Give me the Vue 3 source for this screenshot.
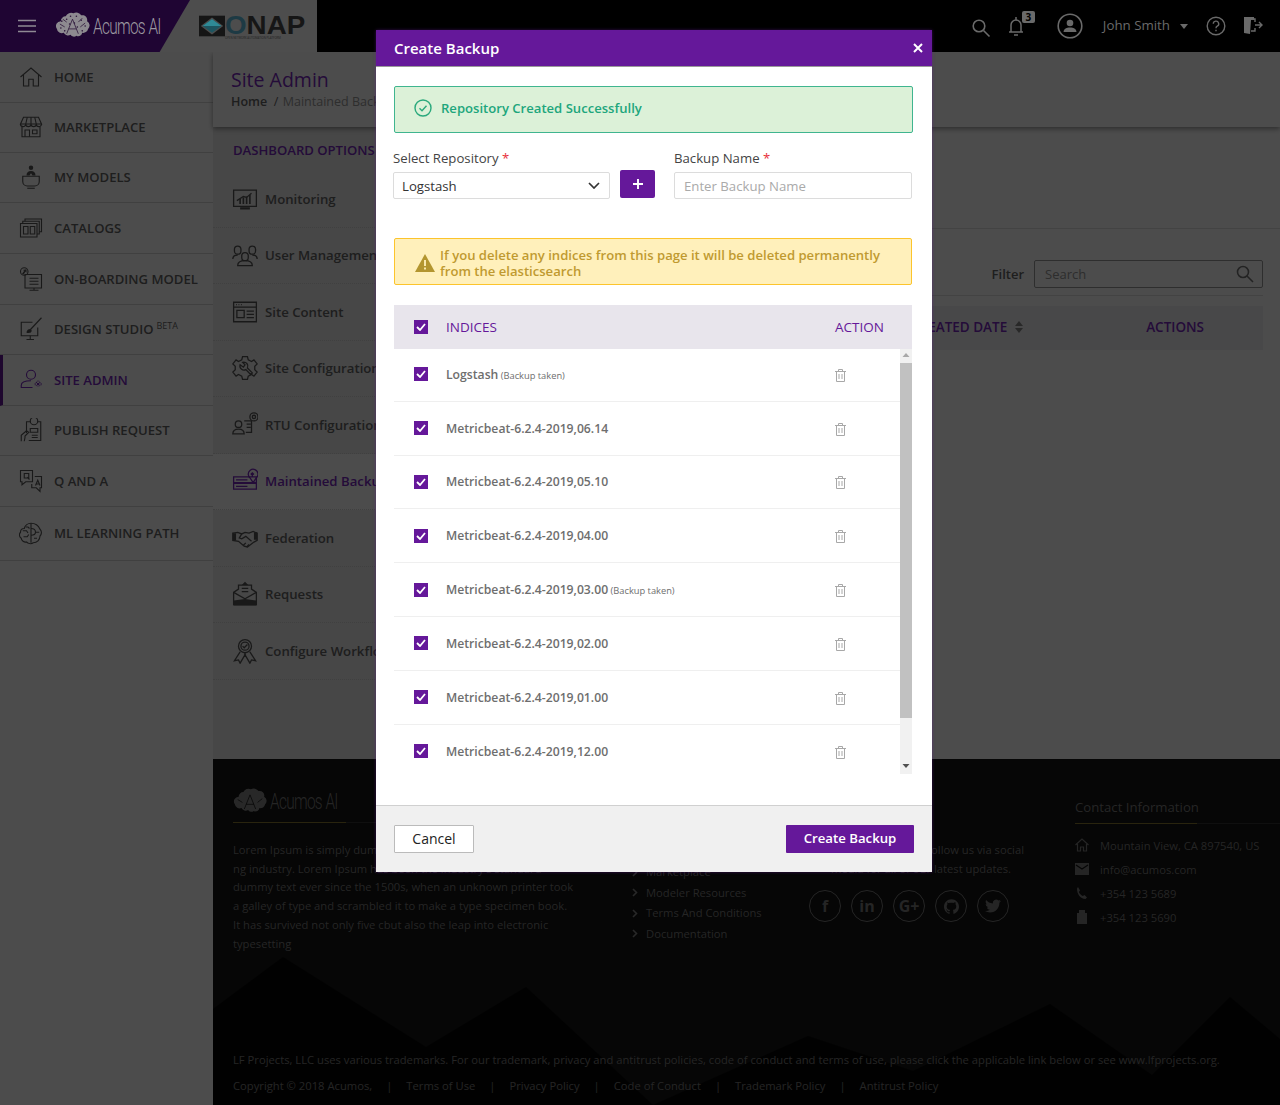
<template>
  <div class="page">
    <!-- Шапка -->
    <header class="topbar">
      <div class="brand">
        <svg class="burger" width="18" height="14" viewBox="0 0 18 14"><path d="M0 1.500h18M0 7h18M0 12.500h18" stroke="#8f8a94" stroke-width="1.600" /></svg>
        <svg class="brain" width="35" height="27" viewBox="0 0 36 27">
          <path :d="brainPath" fill="#8d8a90" />
          <path d="M18 7 12 22M18 7l6 15M14 17h8M5 12l5 3M31 11l-5 4M8 7l4 3M28 6l-4 4" stroke="#2a1338" stroke-width=".8" fill="none" />
          <circle v-for="(d, i) in brainDots" :key="i" :cx="d[0]" :cy="d[1]" r=".8" fill="#2a1338" />
        </svg>
        <span class="brand-name">Acumos<span class="brand-ai">AI</span></span>
      </div>
      <div class="onap">
        <svg width="26" height="22" viewBox="0 0 29 23">
          <path d="M0 0h29v23H0z" fill="#151515" />
          <path d="M14.500 2 27 11.500 14.500 21 2 11.500z" fill="#4d4d4d" />
          <path d="M14.500 4 25 11.500 14.500 19 4 11.500z" fill="#1d5560" />
          <path d="M14.500 4 25 11.500H4z" fill="#2f8a96" />
        </svg>
        <div class="onap-text">
          <span class="onap-name"><span class="onap-o">O</span>NAP</span>
          <span class="onap-sub">OPEN NETWORK AUTOMATION PLATFORM</span>
        </div>
      </div>
      <div class="top-actions">
        <svg width="20" height="20" viewBox="0 0 20 20" fill="none" stroke="#6a6a6a" stroke-width="1.600"><circle cx="8" cy="8" r="5.800" /><path d="m12.500 12.500 6 6" /></svg>
        <div class="bell">
          <svg width="18" height="22" viewBox="0 0 18 22" fill="none" stroke="#6a6a6a" stroke-width="1.500"><path d="M2 17h14M4 17V10a5 5 0 0 1 10 0v7M9 2v3M7 20h4" /></svg>
          <span class="bell-count">3</span>
        </div>
        <svg class="avatar" width="26" height="26" viewBox="0 0 26 26"><circle cx="13" cy="13" r="11.800" fill="none" stroke="#6a6a6a" stroke-width="1.600" /><circle cx="13" cy="10" r="3.300" fill="#6a6a6a" /><path d="M6.500 19c.5-3.500 3-4.500 6.500-4.500s6 1 6.500 4.500z" fill="#6a6a6a" /></svg>
        <span class="user-name">John Smith</span>
        <span class="caret"></span>
        <svg class="help" width="20" height="20" viewBox="0 0 20 20" fill="none" stroke="#6a6a6a" stroke-width="1.400"><circle cx="10" cy="10" r="8.800" /><path d="M7.300 7.800a2.700 2.700 0 1 1 4 2.400c-.9.500-1.300 1-1.300 2M10 13.800v1.400" /></svg>
        <svg width="21" height="20" viewBox="0 0 21 20"><path d="M1 1h10v3H8l-1 14-6-1z" fill="#6a6a6a" /><path d="M8 3h4v3M12 12v3H8M12 9h7M16 6l3 3-3 3" fill="none" stroke="#6a6a6a" stroke-width="1.400" /></svg>
      </div>
    </header>

    <div class="layout">
      <!-- Левое меню -->
      <nav class="sidebar">
        <a
          v-for="item in menu"
          :key="item.label"
          class="menu-item"
          :class="{ active: item.active }"
          :style="{ height: item.h + 'px' }"
        >
          <svg class="menu-icon" width="24" height="24" viewBox="0 0 32 32" fill="none">
            <path v-for="(d, i) in item.paths" :key="i" :d="d" />
            <path v-if="item.fill" class="solid" :d="item.fill" />
          </svg>
          <span>{{ item.label }}<sup v-if="item.beta">BETA</sup></span>
        </a>
      </nav>

      <main class="main">
        <div class="titlebar">
          <h1>Site Admin</h1>
          <p><b>Home</b>&nbsp; / &nbsp;<span>Maintained Backup</span></p>
        </div>

        <div class="content">
          <aside class="options">
            <h2>DASHBOARD OPTIONS</h2>
            <a
              v-for="opt in options"
              :key="opt.label"
              class="option"
              :class="{ active: opt.active }"
            >
              <svg class="option-icon" width="26" height="26" viewBox="0 0 32 32" fill="none">
                <path v-for="(d, i) in opt.paths" :key="i" :d="d" />
                <path v-if="opt.fill" class="solid" :d="opt.fill" />
              </svg>
              <span>{{ opt.label }}</span>
            </a>
          </aside>

          <section class="panel">
            <div class="filter-row">
              <label>Filter</label>
              <div class="search">
                <span>Search</span>
                <svg width="18" height="18" viewBox="0 0 18 18" fill="none" stroke="#777" stroke-width="1.600"><circle cx="7" cy="7" r="5.500" /><path d="m11 11 6 6" /></svg>
              </div>
            </div>
            <div class="panel-head">
              <span class="th-date">CREATED DATE</span>
              <svg width="8" height="12" viewBox="0 0 8 12"><path d="M4 0l4 5H0zM4 12 0 7h8z" fill="#888" /></svg>
              <span class="th-actions">ACTIONS</span>
            </div>
          </section>
        </div>

        <footer class="footer">
          <svg class="peaks" width="1067" height="346" viewBox="0 0 1067 346">
            <path d="M0 250 70 198 213 288 313 228 440 346 595 277 700 312 837 245 939 316 1017 238 1067 280V346H0z" fill="#060606" />
          </svg>
          <div class="foot-cols">
            <div class="foot-about">
              <div class="foot-logo">
                <svg width="34" height="26" viewBox="0 0 36 27">
                  <path :d="brainPath" fill="#888" />
                  <path d="M18 7 12 22M18 7l6 15M14 17h8M5 12l5 3M31 11l-5 4" stroke="#111" stroke-width=".8" fill="none" />
                </svg>
                <span class="foot-logo-name">Acumos<span class="brand-ai">AI</span></span>
              </div>
              <div class="gold-rule"></div>
              <p>Lorem Ipsum is simply dummy text of the printi<br />ng industry. Lorem Ipsum has been the industry's standard<br />dummy text ever since the 1500s, when an unknown printer took<br />a galley of type and scrambled it to make a type specimen book.<br />It has survived not only five cbut also the leap into electronic<br />typesetting</p>
            </div>
            <ul class="foot-links">
              <li v-for="link in footLinks" :key="link">
                <svg width="6" height="9" viewBox="0 0 6 9" fill="none" stroke="#888" stroke-width="1.600"><path d="m1 1 3.500 3.500L1 8" /></svg>
                {{ link }}
              </li>
            </ul>
            <div class="foot-social">
              <p>Please feel free to follow us via social<br />media for all of our latest updates.</p>
              <div class="social-row">
                <span class="social">f</span>
                <span class="social">in</span>
                <span class="social">G+</span>
                <span class="social">
                  <svg width="15" height="15" viewBox="0 0 24 24" fill="#7c7c7c"><path d="M12 .297c-6.630 0-12 5.373-12 12 0 5.303 3.438 9.800 8.205 11.385.6.113.82-.258.82-.577 0-.285-.01-1.040-.015-2.040-3.338.724-4.042-1.610-4.042-1.610C4.422 18.070 3.633 17.700 3.633 17.700c-1.087-.744.084-.729.084-.729 1.205.084 1.838 1.236 1.838 1.236 1.070 1.835 2.809 1.305 3.495.998.108-.776.417-1.305.76-1.605-2.665-.3-5.466-1.332-5.466-5.930 0-1.310.465-2.380 1.235-3.220-.135-.303-.54-1.523.105-3.176 0 0 1.005-.322 3.300 1.230.96-.267 1.980-.399 3-.405 1.020.006 2.040.138 3 .405 2.280-1.552 3.285-1.230 3.285-1.230.645 1.653.24 2.873.12 3.176.765.84 1.230 1.910 1.230 3.220 0 4.610-2.805 5.625-5.475 5.920.42.36.81 1.096.81 2.220 0 1.606-.015 2.896-.015 3.286 0 .315.21.69.825.57C20.565 22.092 24 17.592 24 12.297c0-6.627-5.373-12-12-12" /></svg>
                </span>
                <span class="social">
                  <svg width="16" height="16" viewBox="0 0 24 24" fill="#7c7c7c"><path d="M23.953 4.570a10 10 0 0 1-2.825.775 4.958 4.958 0 0 0 2.163-2.723c-.951.555-2.005.959-3.127 1.184a4.920 4.920 0 0 0-8.384 4.482C7.690 8.095 4.067 6.130 1.640 3.162a4.822 4.822 0 0 0-.666 2.475c0 1.710.87 3.213 2.188 4.096a4.904 4.904 0 0 1-2.228-.616v.06a4.923 4.923 0 0 0 3.946 4.827 4.996 4.996 0 0 1-2.212.085 4.936 4.936 0 0 0 4.604 3.417 9.867 9.867 0 0 1-6.102 2.105c-.39 0-.779-.023-1.170-.067a13.995 13.995 0 0 0 7.557 2.209c9.053 0 13.998-7.496 13.998-13.985 0-.21 0-.42-.015-.63A9.935 9.935 0 0 0 24 4.590z" /></svg>
                </span>
              </div>
            </div>
            <div class="foot-contact">
              <h3>Contact Information</h3>
              <div class="gold-rule short"></div>
              <div class="contact-line">
                <svg width="14" height="14" viewBox="0 0 14 14" fill="none" stroke="#7c7c7c" stroke-width="1.200"><path d="M.5 7 7 1l6.500 6M2.500 6v7H5.500V9h3v4h3V6" /></svg>
                <span>Mountain View, CA 897540, US</span>
              </div>
              <div class="contact-line">
                <svg width="14" height="12" viewBox="0 0 14 12"><path d="M0 0h14v12H0z" fill="#7c7c7c" /><path d="m1 2 6 4 6-4" fill="none" stroke="#111" stroke-width="1.200" /></svg>
                <span>info@acumos.com</span>
              </div>
              <div class="contact-line">
                <svg width="14" height="13" viewBox="0 0 14 13"><path d="M3 0 5 3.500 3.800 5c.8 1.800 2.200 3.200 4 4L9.500 8 12 10.500 10.500 12C5 11.500 2 7 2 1.500z" fill="#7c7c7c" /></svg>
                <span>+354 123 5689</span>
              </div>
              <div class="contact-line">
                <svg width="14" height="14" viewBox="0 0 14 14"><path d="M2 3h10v11H2zM4 0h6v3H4z" fill="#7c7c7c" /></svg>
                <span>+354 123 5690</span>
              </div>
            </div>
          </div>
          <div class="foot-legal">
            <p>LF Projects, LLC uses various trademarks. For our trademark, privacy and antitrust policies, code of conduct and terms of use, please click the applicable link below or see www.lfprojects.org.</p>
            <div class="legal-links">
              <span>Copyright © 2018 Acumos,</span><i>|</i>
              <span>Terms of Use</span><i>|</i>
              <span>Privacy Policy</span><i>|</i>
              <span>Code of Conduct</span><i>|</i>
              <span>Trademark Policy</span><i>|</i>
              <span>Antitrust Policy</span>
            </div>
          </div>
        </footer>
      </main>
    </div>

    <div class="overlay"></div>

    <!-- Модальное окно -->
    <div class="modal">
      <div class="modal-head">
        <span>Create Backup</span>
        <svg width="10" height="10" viewBox="0 0 10 10"><path d="m1 1 8 8M9 1 1 9" stroke="#fff" stroke-width="2" /></svg>
      </div>
      <div class="modal-body">
        <div class="alert success">
          <svg width="18" height="18" viewBox="0 0 18 18" fill="none" stroke="#2aa97c" stroke-width="1.400"><circle cx="9" cy="9" r="8" /><path d="m5.500 9.300 2.500 2.500 4.500-5" /></svg>
          <span>Repository Created Successfully</span>
        </div>
        <div class="form-row">
          <div class="field-select">
            <label>Select Repository <em>*</em></label>
            <div class="select-line">
              <div class="select">
                <span>Logstash</span>
                <svg width="12" height="7" viewBox="0 0 12 7" fill="none" stroke="#333" stroke-width="1.700"><path d="m1 1 5 5 5-5" /></svg>
              </div>
              <button class="add-btn">
                <svg width="12" height="12" viewBox="0 0 12 12"><path d="M6 1v10M1 6h10" stroke="#fff" stroke-width="1.900" /></svg>
              </button>
            </div>
          </div>
          <div class="field-name">
            <label>Backup Name <em>*</em></label>
            <div class="input">Enter Backup Name</div>
          </div>
        </div>
        <div class="alert warning">
          <svg width="20" height="18" viewBox="0 0 20 18"><path d="M10 0 20 18H0z" fill="#b3952f" /><path d="M10 6v6M10 13.500v2" stroke="#fff0bb" stroke-width="1.800" /></svg>
          <span>If you delete any indices from this page it will be deleted permanently from the elasticsearch</span>
        </div>

        <div class="tbl-head">
          <span class="check"><svg width="10" height="8" viewBox="0 0 10 8" fill="none" stroke="#fff" stroke-width="1.800"><path d="m1 4 3 3 5-6" /></svg></span>
          <span class="tbl-title">INDICES</span>
          <span class="tbl-action">ACTION</span>
        </div>
        <div class="tbl-wrap">
          <div class="tbl-rows">
            <div v-for="row in rows" :key="row.name" class="tbl-row">
              <span class="check"><svg width="10" height="8" viewBox="0 0 10 8" fill="none" stroke="#fff" stroke-width="1.800"><path d="m1 4 3 3 5-6" /></svg></span>
              <span class="row-name">{{ row.name }}<small v-if="row.taken"> (Backup taken)</small></span>
              <svg class="trash" width="11" height="13" viewBox="0 0 11 13" fill="none" stroke="#a8a8a8" stroke-width="1"><path d="M0 2.500h11M3.500 2.500V.5h4v2M1.500 2.500v10h8v-10M4 5v5M7 5v5" /></svg>
            </div>
          </div>
          <div class="scrollbar">
            <svg width="12" height="14" viewBox="0 0 12 14"><path d="m6 4 3.500 4h-7z" fill="#a9a9a9" /></svg>
            <div class="thumb"></div>
            <svg class="arrow-down" width="12" height="14" viewBox="0 0 12 14"><path d="m6 10 3.500-4h-7z" fill="#505050" /></svg>
          </div>
        </div>
      </div>
      <div class="modal-foot">
        <button class="btn-cancel">Cancel</button>
        <button class="btn-create">Create Backup</button>
      </div>
    </div>
  </div>
</template>

<script setup>
const brainPath = 'M6 9a5 5 0 0 1 5-5 6 6 0 0 1 8-3 6 6 0 0 1 8 2 5 5 0 0 1 6 6 5 5 0 0 1 1 8 5 5 0 0 1-6 4 4 4 0 0 1-6 3 4 4 0 0 1-6-1 5 5 0 0 1-7-2 5 5 0 0 1-7-4 5 5 0 0 1 4-8z'
const brainDots = [[7, 9], [12, 7], [16, 4], [22, 4], [27, 8], [31, 14], [28, 19], [6, 16], [10, 19], [20, 11], [15, 12], [23, 15]]

// Пункты левого меню
const menu = [
  { label: 'HOME', h: 51, paths: ['M2 16 16 4l14 12', 'M6 13v15h7v-9h6v9h7V13'] },
  { label: 'MARKETPLACE', h: 50, paths: ['M6 3h20l4 9H2z', 'M2 12a3.500 3.500 0 0 0 7 0 3.500 3.500 0 0 0 7 0 3.500 3.500 0 0 0 7 0 3.500 3.500 0 0 0 7 0', 'M4 16v13h24V16', 'M8 29v-9h6v9M18 20h6v5h-6zM11 3 9 12M16 3v9M21 3l2 9'] },
  { label: 'MY MODELS', h: 50, paths: ['M5 15h22v7a6 6 0 0 1-6 6H11a6 6 0 0 1-6-6z', 'M11 31h10'], fill: 'M13 3.500a3 3 0 1 0 6 0 3 3 0 1 0-6 0M10 14c0-4 2-6 6-6s6 2 6 6h-4l-2-3-2 3z' },
  { label: 'CATALOGS', h: 51, paths: ['M2 10h22v18H2z', 'M5 10V7h22v17h-3', 'M8 7V4h22v17h-3', 'M6 14h6v10H6zM15 14h6v10h-6z'] },
  { label: 'ON-BOARDING MODEL', h: 51, paths: ['M8 10H30v18H8z', 'M14 15h12M14 19h12M14 23h12', 'M14 31h12M20 28v3', 'M2 6a5 5 0 1 0 10 0 5 5 0 1 0-10 0'], fill: 'M4 9l3-4-2-1 5-1v5l-1-2-3 4z' },
  { label: 'DESIGN STUDIO', beta: true, h: 50, paths: ['M18 7H3v18h22V14', 'M10 30h10M15 25v5', 'M30 1 15 17'], fill: 'M10 21c0-3 2-5 5-5l2 2c0 3-3 4-7 3z' },
  { label: 'SITE ADMIN', active: true, h: 51, paths: ['M10 9a6 6 0 1 0 12 0 6 6 0 1 0-12 0', 'M18 26H3v-3c0-4 5-6 13-6'], fill: 'M22 21a3.500 3.500 0 1 0 7 0 3.500 3.500 0 1 0-7 0M24 17h3v8h-3zM21 20h9v3h-9z' },
  { label: 'PUBLISH REQUEST', h: 50, paths: ['M10 20V5h6M24 5h5v25H13', 'M15 4a5 5 0 0 0 10 0 5 5 0 0 0-10 0', 'M15 14h10v5H15zM17 23h8M17 26h8', 'M3 31v-8l7-6 3 2-5 5v2l-1 5'] },
  { label: 'Q AND A', h: 51, paths: ['M2 2h16v15H9l-5 4v-4H2z', 'M7 6h6v6H7zM11 11l3 3', 'M21 10h9v15h-2v5l-5-5h-6v-5', 'M22 22l3-7 3 7M23 20h4'] },
  { label: 'ML LEARNING PATH', h: 54, paths: ['M16 3a13 13 0 0 1 12 8c3 3 2 7 0 9 0 5-4 9-9 9-3 2-7 1-9-1-3 1-7-2-7-5-3-2-3-6-1-8 0-3 2-5 5-5 1-4 5-7 9-7z', 'M16 3v26', 'M16 10c4 0 6 2 6 5s-3 4-6 4M22 15h5M20 23h4', 'M5 13h5l2 3M6 21h5l2-3M9 8h3l2 2'] }
]

// Опции панели
const options = [
  { label: 'Monitoring', paths: ['M2 5h28v20H2z', 'M6 18l8-5 4 1 6-5'], fill: 'M9 16h2v6H9zM13 14h2v8h-2zM17 13h2v9h-2zM21 11h2v11h-2zM10 26h12v3H10z' },
  { label: 'User Management', paths: ['M3 9a4 4 0 1 1 8 0v2a4 4 0 0 1-8 0z', 'M21 9a4 4 0 1 1 8 0v2a4 4 0 0 1-8 0z', 'M12 17a4 4 0 1 1 8 0v2a4 4 0 0 1-8 0z', 'M1 21c0-4 2-5 6-5M31 21c0-4-2-5-6-5', 'M7 29c0-4 4-6 9-6s9 2 9 6z'] },
  { label: 'Site Content', paths: ['M2 4h28v24H2z', 'M2 10h28', 'M6 14h9v9H6zM18 15h9M18 19h9M18 23h9', 'M5 7h1M8 7h1M11 7h1'] },
  { label: 'Site Configuration', paths: ['M13 2h6l1 4 4 2 3-2 4 5-3 3v4l3 3-4 5-3-2-4 2-1 4h-6l-1-4-4-2-3 2-4-5 3-3v-4l-3-3 4-5 3 2 4-2z', 'M10 12a5 5 0 0 0 7 6l6 6 2-2-6-6a5 5 0 0 0-6-7l3 3-2 3z'] },
  { label: 'RTU Configuration', paths: ['M4 15a4 4 0 1 0 8 0 4 4 0 1 0-8 0', 'M1 27c0-4 3-6 7-6s7 2 7 6z', 'M15 11h9v14h-7M18 15h5M18 19h5', 'M22 6a5 5 0 1 0 10 0 5 5 0 1 0-10 0', 'M25 6a2 2 0 1 0 4 0 2 2 0 1 0-4 0'] },
  { label: 'Maintained Backup', active: true, paths: ['M2 11h28v7H2zM2 19h28v7H2z', 'M5 14.500h14M5 22.500h14', 'M20 8a6 6 0 1 1 10 4l-4 6-4-6a6 6 0 0 1-2-4z', 'M25 11V6M23 8l2-2 2 2'] },
  { label: 'Federation', paths: ['M1 10l6-1 5 2 4-2 5 1 5-2 5 2v9l-4 2-8 6-4-1-7-6-7-1z', 'M12 11l-3 5 3 1 5-3 7 6M14 25l3-3M18 27l3-3'], fill: 'M1 10h4v9H1zM27 9h4v9h-4z' },
  { label: 'Requests', paths: ['M2 14l6-4V5h16v5l6 4v15H2z', 'M2 14l14 8 14-8', 'M12 9h8M12 13h8'], fill: 'M16 1l4 4h-8zM2 24l14-2 14 2v6H2z' },
  { label: 'Configure Workflow', paths: ['M8 10a8 8 0 1 0 16 0 8 8 0 1 0-16 0', 'M11 10a5 5 0 1 0 10 0 5 5 0 1 0-10 0', 'M13 10l2 2 4-4', 'M10 17 3 28l5-1 2 4 7-12M22 17l7 11-5-1-2 4-7-12'] }
]

const footLinks = ['Marketplace', 'Modeler Resources', 'Terms And Conditions', 'Documentation']

const rows = [
  { name: 'Logstash', taken: true },
  { name: 'Metricbeat-6.2.4-2019,06.14' },
  { name: 'Metricbeat-6.2.4-2019,05.10' },
  { name: 'Metricbeat-6.2.4-2019,04.00' },
  { name: 'Metricbeat-6.2.4-2019,03.00', taken: true },
  { name: 'Metricbeat-6.2.4-2019,02.00' },
  { name: 'Metricbeat-6.2.4-2019,01.00' },
  { name: 'Metricbeat-6.2.4-2019,12.00' }
]
</script>

<style scoped>
.page {
  position: relative;
  width: 1280px;
  height: 1105px;
  overflow: hidden;
  background: #fff;
  font-family: 'Open Sans', 'Noto Sans', sans-serif;
  color: #666;
}

/* Шапка лежит над затемнением, цвета заданы уже приглушённые */
.topbar {
  position: relative;
  z-index: 3;
  height: 52px;
  display: flex;
  align-items: center;
  background: #000;
}
.brand {
  position: relative;
  width: 190px;
  height: 52px;
  flex: none;
  display: flex;
  align-items: center;
  padding-left: 18px;
  box-sizing: border-box;
  background: #4d4d4d;
}
.brand::before {
  content: '';
  position: absolute;
  inset: 0;
  background: #1f0533;
  clip-path: polygon(0 0, 100% 0, 84% 100%, 0 100%);
}
.burger, .brain, .brand-name { position: relative; }
.burger { margin-right: 19px; }
.brain { margin-right: 3px; margin-top: -1px; flex: none; }
.brand-name, .foot-logo-name {
  display: inline-block;
  font-family: Roboto, sans-serif;
  font-weight: 300;
  font-size: 22px;
  letter-spacing: -1px;
  transform: scaleX(.7);
  transform-origin: left center;
  white-space: nowrap;
}
.brand-name { color: #9c98a0; }
.brand-ai { margin-left: 5px; }
.onap {
  width: 127px;
  height: 52px;
  flex: none;
  background: #4d4d4d;
  display: flex;
  align-items: center;
  padding-left: 9px;
  box-sizing: border-box;
}
.onap-text { display: flex; flex-direction: column; padding-top: 3px; }
.onap-name {
  display: inline-block;
  font-family: 'Liberation Sans', sans-serif;
  font-weight: 700;
  font-size: 25px;
  line-height: 21px;
  color: #161616;
  transform: scaleX(1.11);
  transform-origin: left center;
}
.onap-o { color: #1d3a44; }
.onap-sub { font-size: 2.800px; line-height: 4px; color: #222; white-space: nowrap; }
.top-actions {
  margin-left: auto;
  display: flex;
  align-items: center;
  padding-right: 16px;
  color: #6a6a6a;
}
.top-actions > svg:first-child { margin-top: 4px; margin-right: 16px; }
.bell { position: relative; width: 33px; margin-right: 17px; margin-top: 5px; }
.bell-count {
  position: absolute;
  left: 15px;
  top: -4px;
  width: 13px;
  height: 12px;
  background: #6a6a6a;
  border-radius: 2px;
  color: #000;
  font-size: 10px;
  font-weight: 700;
  line-height: 12px;
  text-align: center;
}
.avatar { margin-right: 20px; }
.user-name { font-size: 13.300px; line-height: 16px; margin-right: 10px; margin-top: -3px; }
.caret {
  width: 0;
  height: 0;
  border-left: 4.500px solid transparent;
  border-right: 4.500px solid transparent;
  border-top: 5px solid #6a6a6a;
  margin-right: 18px;
}
.help { margin-right: 17px; }

.layout { display: flex; height: 1053px; }

.sidebar {
  width: 213px;
  flex: none;
  background: #fff;
}
.menu-item {
  display: flex;
  align-items: center;
  gap: 11px;
  padding: 0 0 1px 19px;
  border-bottom: 1px solid #d8d8d8;
  box-sizing: border-box;
  font-size: 13.100px;
  font-weight: 600;
  color: #666;
  white-space: nowrap;
}
.menu-icon { stroke: #555; stroke-width: 1.500; flex: none; }
.menu-icon .solid { fill: #555; stroke: none; }
.menu-item sup { font-size: 9px; margin-left: 3px; font-weight: 400; }
.menu-item.active {
  color: #7a28c0;
  border-left: 3px solid #65189a;
  padding-left: 16px;
}
.menu-item.active .menu-icon { stroke: #7a28c0; }
.menu-item.active .solid { fill: #7a28c0; }

.main { flex: 1; min-width: 0; display: flex; flex-direction: column; }
.titlebar {
  height: 75px;
  flex: none;
  padding: 15px 18px 0;
  box-sizing: border-box;
  box-shadow: 0 2px 5px rgba(0,0,0,.4);
  position: relative;
  background: #fff;
}
.titlebar h1 {
  margin: 0;
  font-size: 19.500px;
  line-height: 26px;
  font-weight: 400;
  color: #7a28c0;
}
.titlebar p { margin: 0; font-size: 12.500px; line-height: 18px; color: #666; }
.titlebar b { font-weight: 600; }
.titlebar p span { color: #9a9a9a; margin-left: -2px; }

.content { height: 632px; flex: none; display: flex; }
.options { width: 260px; flex: none; background: #ededed; padding-top: 13px; box-sizing: border-box; }
.options h2 {
  margin: 0 0 10px 20px;
  font-size: 13.100px;
  line-height: 21px;
  font-weight: 600;
  color: #7a28c0;
  white-space: nowrap;
}
.option {
  display: flex;
  align-items: center;
  height: 56.500px;
  gap: 7px;
  padding-left: 19px;
  box-sizing: border-box;
  border-bottom: 1px dotted #d8d8d8;
  font-size: 13.200px;
  font-weight: 600;
  color: #666;
  white-space: nowrap;
}
.option-icon { stroke: #555; stroke-width: 1.600; flex: none; }
.option-icon .solid { fill: #555; stroke: none; }
.option.active { background: #fff; color: #7a28c0; }
.option.active .option-icon { stroke: #7a28c0; }
.option.active .solid { fill: #7a28c0; }

.panel { flex: 1; min-width: 0; padding: 101px 17px 0 0; box-sizing: border-box; }
.filter-row {
  display: flex;
  align-items: center;
  justify-content: flex-end;
  gap: 10px;
  border-top: 1px solid #e0e0e0;
  margin-right: -17px;
  padding: 31px 17px 8px 0;
  position: relative;
}
.filter-row::after {
  content: '';
  position: absolute;
  left: 0;
  right: 17px;
  bottom: 0;
  border-bottom: 1px solid #e0e0e0;
}
.filter-row label { font-size: 13px; font-weight: 600; color: #666; }
.search {
  width: 229px;
  height: 28px;
  display: flex;
  align-items: center;
  justify-content: space-between;
  padding: 0 8px 0 10px;
  box-sizing: border-box;
  border: 1px solid #999;
  border-radius: 2px;
  font-size: 13px;
  color: #999;
}
.panel-head {
  height: 44px;
  margin-top: 10px;
  padding-bottom: 2px;
  box-sizing: border-box;
  display: flex;
  align-items: center;
  background: #f1f1f5;
  color: #7a28c0;
  font-size: 13.500px;
  font-weight: 600;
}
.th-date { margin-left: 438px; margin-right: 8px; white-space: nowrap; }
.th-actions { margin-left: 123px; }

.footer {
  position: relative;
  flex: 1;
  background: #141414;
  color: #7c7c7c;
  overflow: hidden;
  font-size: 11.220px;
}
.peaks { position: absolute; left: 0; top: 0; }
.foot-cols {
  position: relative;
  display: grid;
  grid-template-columns: 399px 177px 266px 1fr;
  height: 293px;
  padding: 30px 0 0 20px;
  box-sizing: border-box;
}
.foot-logo { display: flex; align-items: center; gap: 3px; height: 24px; }
.gold-rule {
  width: 370px;
  height: 1px;
  background: linear-gradient(90deg, #8a7a30 113px, #333 113px);
  margin: 9px 0 18px;
}
.gold-rule.short { width: 205px; background: linear-gradient(90deg, #8a7a30 122px, #333 122px); margin: 6px 0 9px; }
.foot-about p { margin: 0; line-height: 18.700px; white-space: nowrap; }
.foot-links { list-style: none; margin: 0; padding: 73px 0 0; line-height: 20.500px; }
.foot-links li { display: flex; align-items: center; gap: 8px; }
.foot-social p { margin: 0; padding: 52px 0 0 22px; line-height: 18.700px; white-space: nowrap; }
.social-row { display: flex; gap: 10px; margin-top: 12px; }
.social {
  width: 30px;
  height: 30px;
  border: 1px solid #7c7c7c;
  border-radius: 50%;
  display: flex;
  align-items: center;
  justify-content: center;
  font-size: 16px;
  font-weight: 700;
}
.foot-contact h3 { margin: 0; font-size: 13.200px; line-height: 20px; font-weight: 400; padding-top: 8px; }
.contact-line { display: flex; align-items: center; gap: 11px; height: 24px; }
.foot-legal { position: relative; padding-left: 20px; }
.foot-legal p { margin: 0 0 10px; line-height: 16px; white-space: nowrap; }
.legal-links { display: flex; gap: 14px; line-height: 16px; }
.legal-links i { font-style: normal; }

.overlay {
  position: absolute;
  inset: 0;
  z-index: 2;
  background: rgba(0,0,0,.7);
}

.modal {
  position: absolute;
  left: 376px;
  top: 30px;
  z-index: 4;
  width: 556px;
  height: 842px;
  display: flex;
  flex-direction: column;
  background: #fff;
  box-shadow: 0 0 3px rgba(101,24,154,.5);
}
.modal-head {
  height: 37px;
  flex: none;
  display: flex;
  align-items: center;
  justify-content: space-between;
  padding: 0 9px 1px 18px;
  box-sizing: border-box;
  background: #65189a;
  border-bottom: 1px solid #9a9a9a;
  color: #fff;
  font-size: 15px;
  font-weight: 600;
}
.modal-body { flex: 1; min-height: 0; padding: 19px 20px 0 18px; display: flex; flex-direction: column; }
.alert {
  display: flex;
  align-items: center;
  height: 47px;
  flex: none;
  box-sizing: border-box;
  border-radius: 2px;
  font-size: 13.100px;
  line-height: 16px;
  font-weight: 600;
}
.alert svg { flex: none; }
.alert.success {
  gap: 9px;
  padding: 0 0 4px 19px;
  margin-right: -1px;
  background: #dcf1d8;
  border: 1.500px solid #3fb58f;
  color: #20a67c;
}
.alert.warning {
  gap: 5px;
  padding: 2px 20px 0;
  background: #fff0bb;
  border: 1.500px solid #fcc42c;
  color: #bf9a30;
}
.form-row { display: flex; gap: 19px; margin-top: 13px; height: 92px; flex: none; }
.field-select { width: 262px; margin-left: -1px; }
.field-name { width: 239px; }
.form-row label { display: block; font-size: 13.200px; line-height: 24px; color: #444; }
.form-row em { font-style: normal; color: #e8303a; }
.select-line { display: flex; gap: 10px; align-items: flex-start; }
.select, .input {
  height: 27px;
  margin-top: 2px;
  box-sizing: border-box;
  border: 1px solid #dcdcdc;
  border-radius: 2px;
  display: flex;
  align-items: center;
  font-size: 13.200px;
}
.select { width: 217px; justify-content: space-between; padding: 0 9px 0 8px; color: #333; }
.input { padding-left: 9px; color: #aaa; }
.add-btn {
  width: 35px;
  height: 28px;
  padding: 0;
  border: none;
  border-radius: 2px;
  background: #65189a;
  display: flex;
  align-items: center;
  justify-content: center;
}
.tbl-head {
  margin-top: 20px;
  height: 44px;
  flex: none;
  display: flex;
  align-items: center;
  padding: 0 28px 0 20px;
  background: #e8e5ec;
  color: #65189a;
  font-size: 13.500px;
  font-weight: 500;
}
.check {
  width: 14px;
  height: 14px;
  flex: none;
  background: #65189a;
  display: flex;
  align-items: center;
  justify-content: center;
  margin-right: 18px;
}
.tbl-action { margin-left: auto; }
.tbl-wrap { display: flex; height: 425px; flex: none; overflow: hidden; }
.tbl-rows { flex: 1; min-width: 0; margin-top: -1px; }
.tbl-row {
  height: 53.800px;
  display: flex;
  align-items: center;
  padding-left: 20px;
  box-sizing: border-box;
  border-bottom: 1px solid #efefef;
  font-size: 12.200px;
  font-weight: 600;
  color: #6e6e6e;
}
.tbl-row:last-child { border-bottom: none; }
.row-name { flex: 1; white-space: nowrap; }
.row-name small { font-size: 9.300px; font-weight: 400; }
.trash { margin-right: 54px; margin-top: 2px; }
.scrollbar { width: 12px; flex: none; display: flex; flex-direction: column; background: #f1f1f1; }
.thumb { height: 355px; background: #c1c1c1; }
.arrow-down { margin-top: auto; margin-bottom: 2px; }
.modal-foot {
  height: 67px;
  flex: none;
  display: flex;
  align-items: center;
  justify-content: space-between;
  padding: 0 18px 1px 18px;
  background: #f0f0f0;
  border-top: 1px solid #d0d0d0;
  box-sizing: border-box;
}
.btn-cancel, .btn-create {
  height: 28px;
  padding: 0;
  font-family: inherit;
  border-radius: 1px;
}
.btn-cancel { width: 80px; background: #fff; border: 1px solid #bbb; color: #222; font-size: 14px; font-weight: 500; }
.btn-create { width: 128px; background: #65189a; border: none; color: #fff; font-size: 13.200px; font-weight: 600; padding-bottom: 2px; }
</style>
